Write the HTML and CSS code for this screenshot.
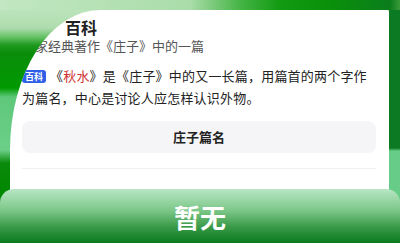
FILE: index.html
```html
<!DOCTYPE html>
<html lang="zh">
<head>
<meta charset="utf-8">
<link rel="stylesheet" href="styles.css">
</head>
<body>
  <div class="top"></div>
  <div class="main">
    <div class="card">
      <div class="title">百科</div>
      <div class="sub">道家经典著作《庄子》中的一篇</div>
      <p class="desc"><span class="badge">百科</span><span class="txt">《<span class="red">秋水</span>》是《庄子》中的又一长篇，用篇首的两个字作为篇名，中心是讨论人应怎样认识外物。</span></p>
      <div class="btn">庄子篇名</div>
      <div class="divider"></div>
    </div>
    <div class="strip"></div>
  </div>
  <div class="banner-wrap"><div class="banner">暂无</div></div>
</body>
</html>
```
FILE: styles.css
```css
html, body {
  margin: 0;
  padding: 0;
}
body {
  width: 400px;
  height: 243px;
  overflow: hidden;
  display: flex;
  flex-direction: column;
  font-family: "Noto Sans CJK SC", "Noto Sans", sans-serif;
  color: #222;
  background: linear-gradient(to bottom,
    #c4e8c4 0, #aedcae 28px, #66c266 37px, #1f9a1f 45px, #0a8d0a 53px,
    #009a00 88px, #5ec87a 97px, #6ccf88 150px, #0a8a0a 163px, #008800 200px);
}
.top {
  height: 10px;
  flex: none;
  background: linear-gradient(to right, #c2e7c2 0, #aadcaa 190px, #45b545 240px, #129a12 280px, #0a900a 330px, #0b7d1c 390px, #3a9a3a 400px);
}
.main {
  height: 179px;
  flex: none;
  display: flex;
}
.card {
  flex: 1;
  margin-left: 10px;
  background: #fff;
  border-radius: 90px 3px 0 0 / 140px 3px 0 0;
  overflow: hidden;
  padding: 8px 13px 0 12px;
}
.title {
  font-size: 16px;
  font-weight: 700;
  line-height: 19px;
  margin-left: 43px;
}
.sub {
  font-size: 13px;
  line-height: 18px;
  color: #555;
  white-space: nowrap;
}
.desc {
  margin: 10px 0 0;
  font-size: 13px;
  line-height: 21.5px;
  letter-spacing: 0.2px;
  color: #222;
}
.badge {
  display: inline-block;
  width: 24px;
  height: 13px;
  line-height: 13px;
  background: #2f5fe6;
  color: #fff;
  font-size: 9px;
  font-weight: 700;
  text-align: center;
  border-radius: 3px;
  letter-spacing: 0;
  vertical-align: 1px;
  margin-right: 4px;
}
.red {
  color: #d03232;
}
.btn {
  margin-top: 13px;
  height: 32px;
  line-height: 32px;
  background: #f5f5f7;
  border-radius: 8px;
  text-align: center;
  font-size: 13px;
  font-weight: 700;
  color: #222;
}
.divider {
  margin-top: 15px;
  height: 1px;
  background: #efefef;
}
.strip {
  width: 11px;
  flex: none;
  background: linear-gradient(to bottom, #0b7a22 0, #0b7a22 138px, #66cc88 141px);
}
.banner-wrap {
  height: 54px;
  flex: none;
  background: linear-gradient(to right, #008800 10px, #fff 10px, #fff 389px, #66cc88 389px);
}
.banner {
  height: 100%;
  box-sizing: border-box;
  padding-top: 13px;
  border-radius: 14px 14px 0 0;
  background: linear-gradient(to bottom, #b8e6c4 0, #7cc788 40%, #3a9a48 70%, #0a7a1e 100%);
  color: #fff;
  font-size: 26px;
  font-weight: 700;
  line-height: 30px;
  text-align: center;
}
```
